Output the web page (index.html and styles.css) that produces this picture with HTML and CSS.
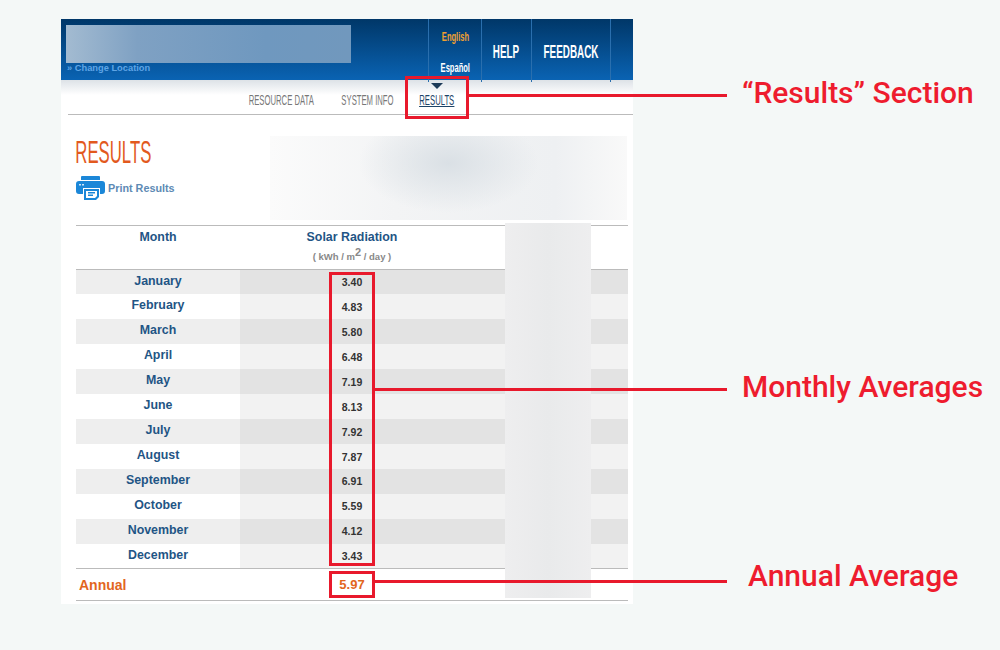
FILE: index.html
```html
<!DOCTYPE html>
<html lang="en">
<head>
<meta charset="UTF-8">
<title>Results</title>
<link rel="stylesheet" href="styles.css">
</head>
<body>

<div class="shot">
  <header class="top">
    <div class="place">
      <div class="place-blur"></div>
      <a class="change">» Change Location</a>
    </div>
    <div class="top-links">
      <div class="top-cell lang">
        <span class="narrow on">English</span>
        <span class="narrow">Español</span>
      </div>
      <div class="top-cell help"><span class="narrow">HELP</span></div>
      <div class="top-cell feedback"><span class="narrow">FEEDBACK</span></div>
      <div class="top-cell spare"></div>
    </div>
  </header>

  <nav class="tabs">
    <a class="tab tab-data"><span class="narrow">RESOURCE DATA</span></a>
    <a class="tab tab-info"><span class="narrow">SYSTEM INFO</span></a>
    <a class="tab tab-results current"><span class="narrow">RESULTS</span></a>
  </nav>

  <section class="intro">
    <div class="intro-left">
      <h1><span class="narrow">RESULTS</span></h1>
      <a class="print">
        <svg width="29" height="24" viewBox="0 0 29 24">
          <path fill="#1b87d8" d="M6 0h17a1 1 0 0 1 1 1v3H5V1a1 1 0 0 1 1-1z"/>
          <path fill="#1b87d8" d="M3 5h23a3 3 0 0 1 3 3v7a3 3 0 0 1-3 3h-2v-6H7v6H3a3 3 0 0 1-3-3V8a3 3 0 0 1 3-3z"/>
          <path fill="#1b87d8" d="M8 13h15v8l-3 3H8z"/>
          <path fill="#fff" d="M10 15h11v5l-2 2h-9z"/>
          <path fill="#1b87d8" d="M12 16h7v1.500h-7zM12 18.500h5V20h-5z"/>
          <path fill="#cfe6f8" d="M3 8h2v1.500H3zM6 8h2v1.500H6z"/>
        </svg>
        Print Results
      </a>
    </div>
    <div class="map-blur"></div>
  </section>

  <table class="data">
    <thead>
      <tr>
        <th>Month</th>
        <th>Solar Radiation<small>( kWh / m<sup>2</sup> / day )</small></th>
        <th></th>
      </tr>
    </thead>
    <tbody>
      <tr><th>January</th><td>3.40</td><td></td></tr>
      <tr><th>February</th><td>4.83</td><td></td></tr>
      <tr><th>March</th><td>5.80</td><td></td></tr>
      <tr><th>April</th><td>6.48</td><td></td></tr>
      <tr><th>May</th><td>7.19</td><td></td></tr>
      <tr><th>June</th><td>8.13</td><td></td></tr>
      <tr><th>July</th><td>7.92</td><td></td></tr>
      <tr><th>August</th><td>7.87</td><td></td></tr>
      <tr><th>September</th><td>6.91</td><td></td></tr>
      <tr><th>October</th><td>5.59</td><td></td></tr>
      <tr><th>November</th><td>4.12</td><td></td></tr>
      <tr><th>December</th><td>3.43</td><td></td></tr>
    </tbody>
    <tfoot>
      <tr><th>Annual</th><td>5.97</td><td></td></tr>
    </tfoot>
  </table>
</div>

<!-- blurred out column, sits over the table -->
<div class="col-blur"></div>

<!-- red annotations -->
<div class="box box-results"></div>
<div class="line line-results"></div>
<div class="note note-results">“Results” Section</div>

<div class="box box-monthly"></div>
<div class="line line-monthly"></div>
<div class="note note-monthly">Monthly Averages</div>

<div class="box box-annual"></div>
<div class="line line-annual"></div>
<div class="note note-annual">Annual Average</div>

</body>
</html>
```

FILE: styles.css
```css
html,body{margin:0;padding:0;}
body{position:relative;width:1000px;height:650px;overflow:hidden;background:#f4f8f7;font-family:"Liberation Sans",Arial,sans-serif;}

/* no condensed face installed, so squeeze the normal one */
.narrow{display:inline-block;white-space:nowrap;transform:scaleX(.55);}

.shot{width:572px;height:585px;margin:19px 0 0 61px;background:#fff;}

/* top bar */
.top{display:flex;justify-content:space-between;height:61px;background:linear-gradient(#003768,#0a63b3);}
.place{width:285px;padding:6px 0 0 5px;}
.place-blur{height:38px;background:linear-gradient(90deg,#a3bbd1 0%,#7fa1c3 25%,#6f98bf 70%,#7198bd 100%);}
.change{display:block;padding-left:1px;font-size:9.300px;line-height:11px;font-weight:bold;color:#5ea5e6;}
.top-links{display:flex;height:63px;}
.top-cell{display:flex;flex-direction:column;align-items:center;justify-content:center;height:63px;box-sizing:border-box;border-left:1px solid #2a6fae;color:#fff;font-weight:bold;}
.lang{width:53px;justify-content:space-between;padding:10px 0 7px;font-size:13px;}
.lang .narrow{transform:scaleX(.58);}
.lang .on{color:#f0a030;}
.help{width:50px;padding-top:4px;font-size:18px;}
.feedback{width:79px;padding-top:4px;font-size:18px;}
.spare{width:23px;}

/* tabs */
.tabs{display:flex;height:35px;box-sizing:border-box;padding-left:188px;background:linear-gradient(#bbb,#bbb) right bottom/565px 1px no-repeat,linear-gradient(#dde2e7,#fff 15px) no-repeat;font-size:14px;}
.tab{display:flex;justify-content:center;margin-top:12px;margin-right:26px;height:17px;color:#777;}
.tab-data{width:65px;}
.tab-info{width:54px;}
.tab-results{width:34px;}
.tab.current{position:relative;color:#1d4468;text-decoration:underline;}
.tab.current .narrow{text-decoration:underline;}
.tab.current::before{content:"";position:absolute;left:11px;top:-9px;border:6px solid transparent;border-top-color:#1d3b58;border-bottom:0;}

/* intro */
.intro{display:flex;height:110px;padding-left:15px;}
.intro-left{width:194px;}
h1{width:75px;display:flex;justify-content:center;margin:20px 0 0;font-size:31px;line-height:36px;font-weight:normal;color:#e2591e;}
h1 .narrow{transform:scaleX(.54);}
.print{display:flex;align-items:center;gap:3px;margin-top:5px;font-size:10.800px;font-weight:bold;color:#5d8ab4;}
.map-blur{width:357px;height:84px;margin-top:21px;background:radial-gradient(ellipse 90px 50px at 50% 32%,#dae0e5,rgba(238,240,243,0) 100%),linear-gradient(90deg,#fbfbfb,#f3f4f5 35%,#eef0f2 80%,#f9f9f9);}

/* table */
.data{width:552px;margin:0 0 0 15px;border-collapse:collapse;table-layout:fixed;}
.data th:nth-child(1){width:164px;}
.data th:nth-child(2){width:224px;}
.data thead tr{height:44px;border-top:1px solid #bbb;border-bottom:1px solid #bbb;}
.data thead th{padding:4px 0 0;vertical-align:top;font-size:12.400px;line-height:14px;color:#1f5585;}
.data small{display:block;margin-top:6px;font-size:9.500px;line-height:14px;color:#888;}
.data sup{font-size:11px;line-height:0;}
.data tbody tr{height:24.950px;background:#f2f2f2;}
.data tbody tr:nth-child(odd){background:#e3e3e3;}
.data tbody th{padding:0 0 3px;font-size:12.400px;color:#1f5585;background:#fff;}
.data tbody tr:nth-child(odd) th{background:#eee;}
.data tbody td{padding:0;text-align:center;font-size:10.500px;font-weight:bold;color:#333;}
.data tfoot tr{height:32px;border-top:1px solid #bbb;border-bottom:1px solid #bbb;}
.data tfoot th{padding-left:3px;text-align:left;font-size:14px;color:#e2661e;}
.data tfoot td{padding:0;text-align:center;font-size:13px;font-weight:bold;color:#e2661e;}

/* lays over the table */
.col-blur{position:absolute;left:505px;top:223px;width:86px;height:375px;background:linear-gradient(90deg,#eeeeef,#e9eaeb 50%,#eeeeef);}

/* annotations */
.box{position:absolute;box-sizing:border-box;border:3px solid #e8192c;}
.line{position:absolute;height:3px;background:#e8192c;}
.note{position:absolute;font-family:Roboto,sans-serif;font-weight:500;font-size:30px;line-height:34px;color:#ee1c2e;white-space:nowrap;}

.box-results{left:405px;top:76px;width:64px;height:43px;}
.line-results{left:469px;top:94px;width:258px;}
.note-results{left:742px;top:76px;}

.box-monthly{left:329px;top:272px;width:46px;height:294px;}
.line-monthly{left:375px;top:388px;width:352px;}
.note-monthly{left:742px;top:370px;}

.box-annual{left:329px;top:571px;width:46px;height:27px;}
.line-annual{left:375px;top:580px;width:352px;}
.note-annual{left:748px;top:559px;}
```
